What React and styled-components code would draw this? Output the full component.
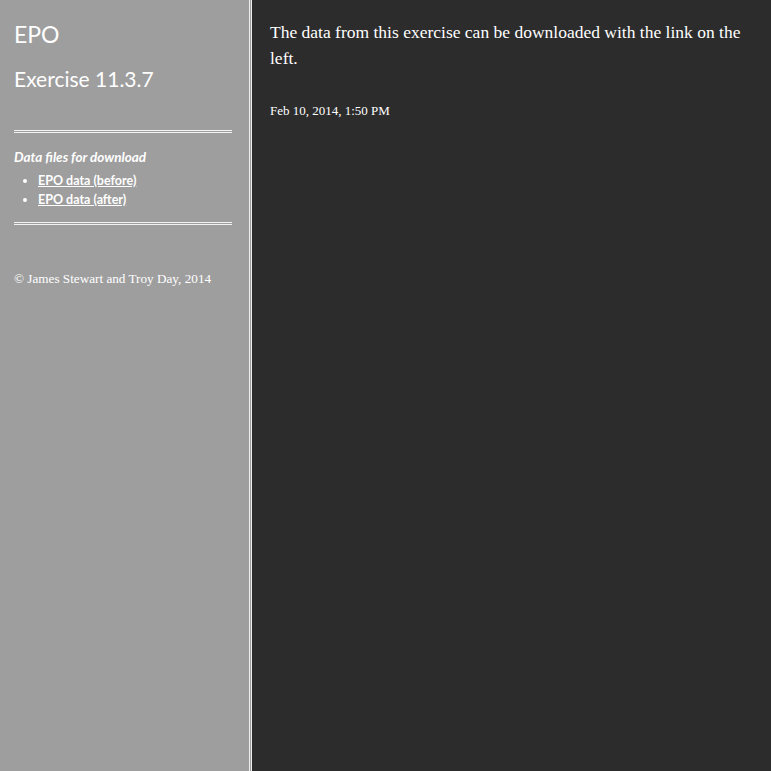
import React from 'react';
import styled, { createGlobalStyle } from 'styled-components';

const GlobalStyle = createGlobalStyle`
    html, body {
        margin: 0;
        padding: 0;
        height: 100%;
        background: #2c2c2c;
    }
    #root {
        height: 100%;
    }
`;

const Page = styled.div`
    display: flex;
    min-height: 771px;
    height: 100%;
`;

const Sidebar = styled.aside`
    width: 252px;
    flex-shrink: 0;
    background: #9e9e9e;
    color: #ffffff;
    box-sizing: border-box;
    padding: 20px 17px 0 14px;
    border-right: 3px double #eeeeee;
    font-family: Lato, "Open Sans", sans-serif;
`;

const SiteTitle = styled.h1`
    margin: 0;
    font-size: 23px;
    font-weight: normal;
    line-height: 28px;
`;

const Subtitle = styled.h2`
    margin: 18px 0 0;
    font-size: 21px;
    font-weight: normal;
    line-height: 26px;
`;

const Rule = styled.hr`
    margin: ${p => p.$top}px 0 0;
    border: 0;
    border-top: 3px double #f2f2f2;
    height: 0;
`;

const SectionLabel = styled.div`
    margin-top: 16px;
    font-size: 13.5px;
    font-style: italic;
    font-weight: bold;
    line-height: 16px;
`;

const FileList = styled.ul`
    margin: 6px 0 0;
    padding-left: 24px;
    font-size: 12.5px;
    line-height: 19px;
`;

const FileLink = styled.a`
    color: #ffffff;
    font-weight: bold;
    text-decoration: underline;
`;

const Footer = styled.div`
    margin-top: 46px;
    font-family: "Liberation Serif", "DejaVu Serif", serif;
    font-size: 13.2px;
    line-height: 16px;
`;

const Main = styled.main`
    flex: 1;
    background: #2c2c2c;
    color: #ffffff;
    padding: 19px 18px 0 18px;
    font-family: "Liberation Serif", "DejaVu Serif", serif;
`;

const Lead = styled.p`
    margin: 0;
    font-size: 17.5px;
    line-height: 26px;
`;

const Stamp = styled.div`
    margin-top: 32px;
    font-size: 13px;
`;

export default function App () {
    return (
        <Page>
            <GlobalStyle />
            <Sidebar>
                <SiteTitle>EPO</SiteTitle>
                <Subtitle>Exercise 11.3.7</Subtitle>
                <Rule $top={38} />
                <SectionLabel>Data files for download</SectionLabel>
                <FileList>
                    <li><FileLink href="#">EPO data (before)</FileLink></li>
                    <li><FileLink href="#">EPO data (after)</FileLink></li>
                </FileList>
                <Rule $top={13} />
                <Footer>© James Stewart and Troy Day, 2014</Footer>
            </Sidebar>
            <Main>
                <Lead>The data from this exercise can be downloaded with the link on the left.</Lead>
                <Stamp>Feb 10, 2014, 1:50 PM</Stamp>
            </Main>
        </Page>
    );
}
